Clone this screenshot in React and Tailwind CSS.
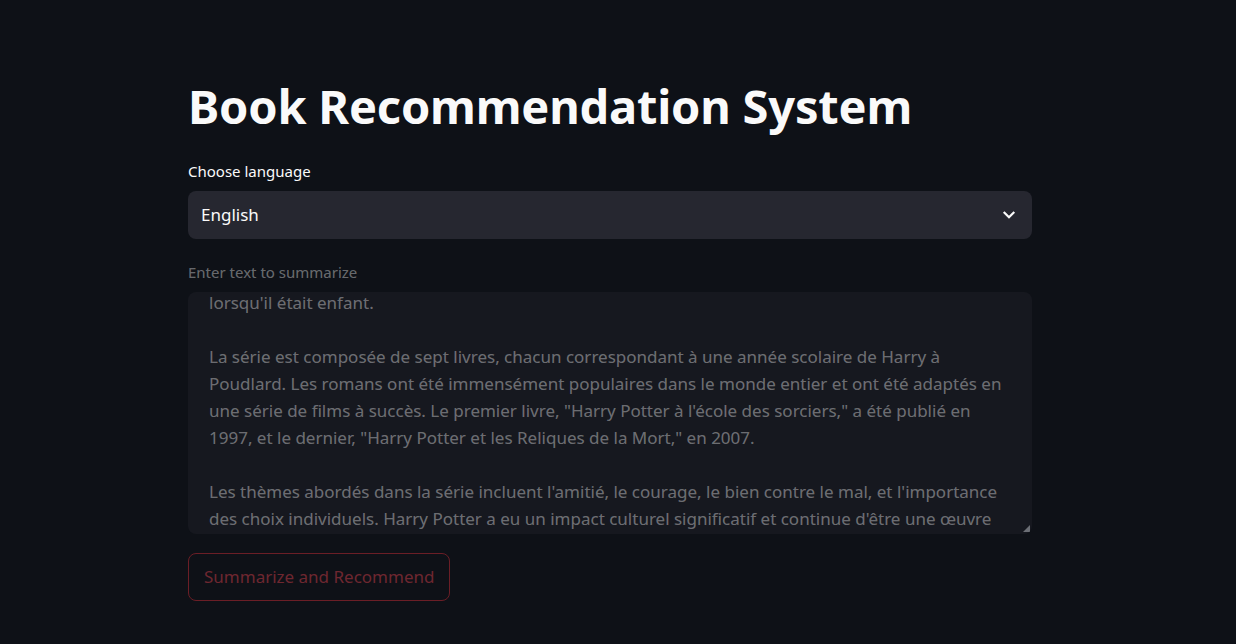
import React from "react";

const LINES = [
  "lorsqu'il était enfant.",
  "",
  "La série est composée de sept livres, chacun correspondant à une année scolaire de Harry à",
  "Poudlard. Les romans ont été immensément populaires dans le monde entier et ont été adaptés en",
  'une série de films à succès. Le premier livre, "Harry Potter à l\'école des sorciers," a été publié en',
  '1997, et le dernier, "Harry Potter et les Reliques de la Mort," en 2007.',
  "",
  "Les thèmes abordés dans la série incluent l'amitié, le courage, le bien contre le mal, et l'importance",
  "des choix individuels. Harry Potter a eu un impact culturel significatif et continue d'être une œuvre",
];

const App = () => {
  return (
    <div className="min-h-screen w-full bg-[#0e1117] font-['Noto_Sans',sans-serif] text-[#fafafa]">
      <div className="ml-[188px] w-[844px] pt-[74px]">
        {/* titre */}
        <h1 className="text-[47px] leading-[64px] font-bold tracking-[-0.2px] text-[#fafafa]">
          Book Recommendation System
        </h1>

        {/* select */}
        <div className="mt-[23px]">
          <label className="block text-[15px] leading-[20px] text-[#fafafa]">Choose language</label>
          <div className="mt-[10px] flex h-[48px] items-center justify-between rounded-[8px] bg-[#262730] pl-[13px] pr-[16px]">
            <span className="text-[17px] text-[#fafafa]">English</span>
            <svg width="14" height="14" viewBox="0 0 14 14" fill="none">
              <path d="M2.5 4.8 L7 9.2 L11.5 4.8" stroke="#fafafa" strokeWidth="2.2" strokeLinecap="square" />
            </svg>
          </div>
        </div>

        {/* textarea (désactivé) */}
        <div className="mt-[23px]">
          <label className="block text-[15px] leading-[20px] text-[#fafafa]/40">Enter text to summarize</label>
          <div className="relative mt-[10px] h-[242px] overflow-hidden rounded-[8px] bg-[#16181f]">
            <div className="-mt-[3px] pl-[21px] text-[17px] leading-[27px] text-[#fafafa]/40">
              {LINES.map((l, i) => (
                <div key={i} className="h-[27px] whitespace-nowrap">
                  {l}
                </div>
              ))}
            </div>
            <svg className="absolute bottom-[2px] right-[2px]" width="7" height="7" viewBox="0 0 7 7">
              <path d="M7 0 L7 7 L0 7 Z" fill="#6b6e75" />
            </svg>
          </div>
        </div>

        {/* bouton désactivé */}
        <button
          type="button"
          className="mt-[19px] h-[48px] rounded-[8px] border border-[#6b1e26] px-[15px] text-[17px] text-[#6e2730]"
        >
          Summarize and Recommend
        </button>
      </div>
    </div>
  );
};

export default App;
